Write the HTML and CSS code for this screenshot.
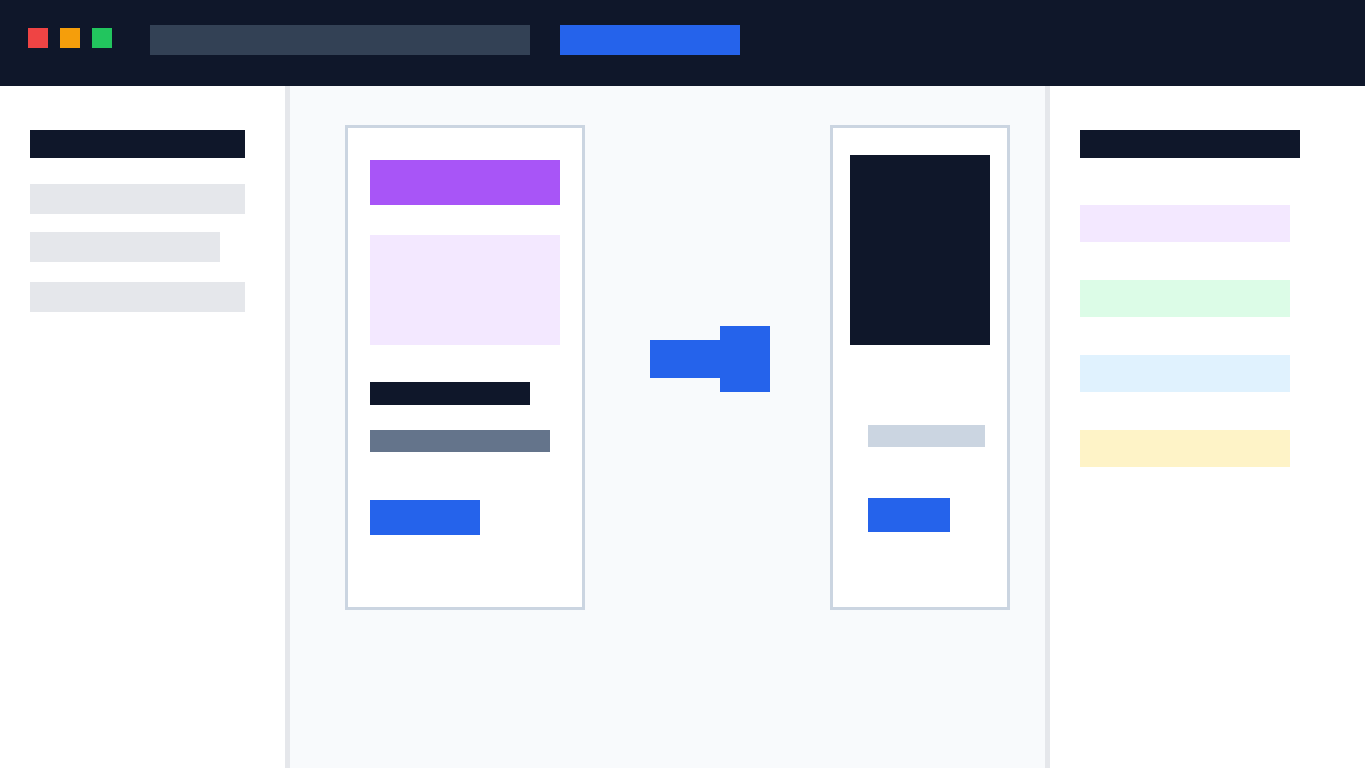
FILE: index.html
```html
<!DOCTYPE html>
<html lang="en">
<head>
<meta charset="utf-8">
<title>Wireframe</title>
<link rel="stylesheet" href="styles.css">
</head>
<body>
<header class="topbar">
  <div class="dots">
    <span class="dot dot-red"></span>
    <span class="dot dot-orange"></span>
    <span class="dot dot-green"></span>
  </div>
  <div class="search"></div>
  <div class="top-btn"></div>
</header>
<div class="layout">
  <aside class="sidebar-left">
    <div class="side-title"></div>
    <div class="side-item side-item-1"></div>
    <div class="side-item side-item-2"></div>
    <div class="side-item side-item-3"></div>
  </aside>
  <main class="canvas">
    <section class="card card-a">
      <div class="a-head"></div>
      <div class="a-media"></div>
      <div class="a-title"></div>
      <div class="a-sub"></div>
      <div class="a-btn"></div>
    </section>
    <div class="arrow">
      <span class="arrow-shaft"></span>
      <span class="arrow-head"></span>
    </div>
    <section class="card card-b">
      <div class="b-media"></div>
      <div class="b-line"></div>
      <div class="b-btn"></div>
    </section>
  </main>
  <aside class="sidebar-right">
    <div class="right-title"></div>
    <div class="tag tag-purple"></div>
    <div class="tag tag-green"></div>
    <div class="tag tag-blue"></div>
    <div class="tag tag-yellow"></div>
  </aside>
</div>
</body>
</html>
```

FILE: styles.css
```css
* { box-sizing: border-box; }
html, body { margin: 0; padding: 0; }
body {
  width: 1365px;
  height: 768px;
  overflow: hidden;
  font-family: "Liberation Sans", Arial, sans-serif;
  background: #ffffff;
}

.topbar {
  height: 86px;
  background: #0f172a;
  display: flex;
  align-items: flex-start;
  padding: 25px 0 0 28px;
}
.dots {
  display: flex;
  gap: 12px;
  margin-top: 3px;
}
.dot { width: 20px; height: 20px; display: block; }
.dot-red { background: #ef4444; }
.dot-orange { background: #f59e0b; }
.dot-green { background: #22c55e; }
.search {
  width: 380px;
  height: 30px;
  background: #334155;
  margin-left: 38px;
}
.top-btn {
  width: 180px;
  height: 30px;
  background: #2563eb;
  margin-left: 30px;
}

.layout {
  display: flex;
  height: 682px;
}

.sidebar-left {
  width: 290px;
  flex: none;
  background: #ffffff;
  border-right: 5px solid #e5e7eb;
  padding: 44px 0 0 30px;
  display: flex;
  flex-direction: column;
}
.side-title { width: 215px; height: 28px; background: #0f172a; }
.side-item { height: 30px; background: #e5e7eb; }
.side-item-1 { width: 215px; margin-top: 26px; }
.side-item-2 { width: 190px; margin-top: 18px; }
.side-item-3 { width: 215px; margin-top: 20px; }

.canvas {
  flex: 1;
  background: #f8fafc;
  padding: 39px 0 0 55px;
  display: flex;
  align-items: flex-start;
}

.card {
  background: #ffffff;
  border: 3px solid #cbd5e1;
  height: 485px;
  display: flex;
  flex-direction: column;
  align-items: flex-start;
  flex: none;
}
.card-a { width: 240px; padding: 32px 0 0 22px; }
.a-head { width: 190px; height: 45px; background: #a855f7; }
.a-media { width: 190px; height: 110px; background: #f3e8ff; margin-top: 30px; }
.a-title { width: 160px; height: 23px; background: #0f172a; margin-top: 37px; }
.a-sub { width: 180px; height: 22px; background: #64748b; margin-top: 25px; }
.a-btn { width: 110px; height: 35px; background: #2563eb; margin-top: 48px; }

.arrow {
  display: flex;
  align-items: center;
  margin: 201px 0 0 65px;
  flex: none;
}
.arrow-shaft { display: block; width: 70px; height: 38px; background: #2563eb; }
.arrow-head { display: block; width: 50px; height: 66px; background: #2563eb; }

.card-b { width: 180px; padding: 27px 0 0 17px; margin-left: 60px; }
.b-media { width: 140px; height: 190px; background: #0f172a; }
.b-line { width: 117px; height: 22px; background: #cbd5e1; margin: 80px 0 0 18px; }
.b-btn { width: 82px; height: 34px; background: #2563eb; margin: 51px 0 0 18px; }

.sidebar-right {
  width: 320px;
  flex: none;
  background: #ffffff;
  border-left: 5px solid #e5e7eb;
  padding: 44px 0 0 30px;
  display: flex;
  flex-direction: column;
}
.right-title { width: 220px; height: 28px; background: #0f172a; }
.tag { width: 210px; height: 37px; margin-top: 38px; }
.tag-purple { background: #f3e8ff; margin-top: 47px; }
.tag-green { background: #dcfce7; }
.tag-blue { background: #e0f2fe; }
.tag-yellow { background: #fef3c7; }
```
